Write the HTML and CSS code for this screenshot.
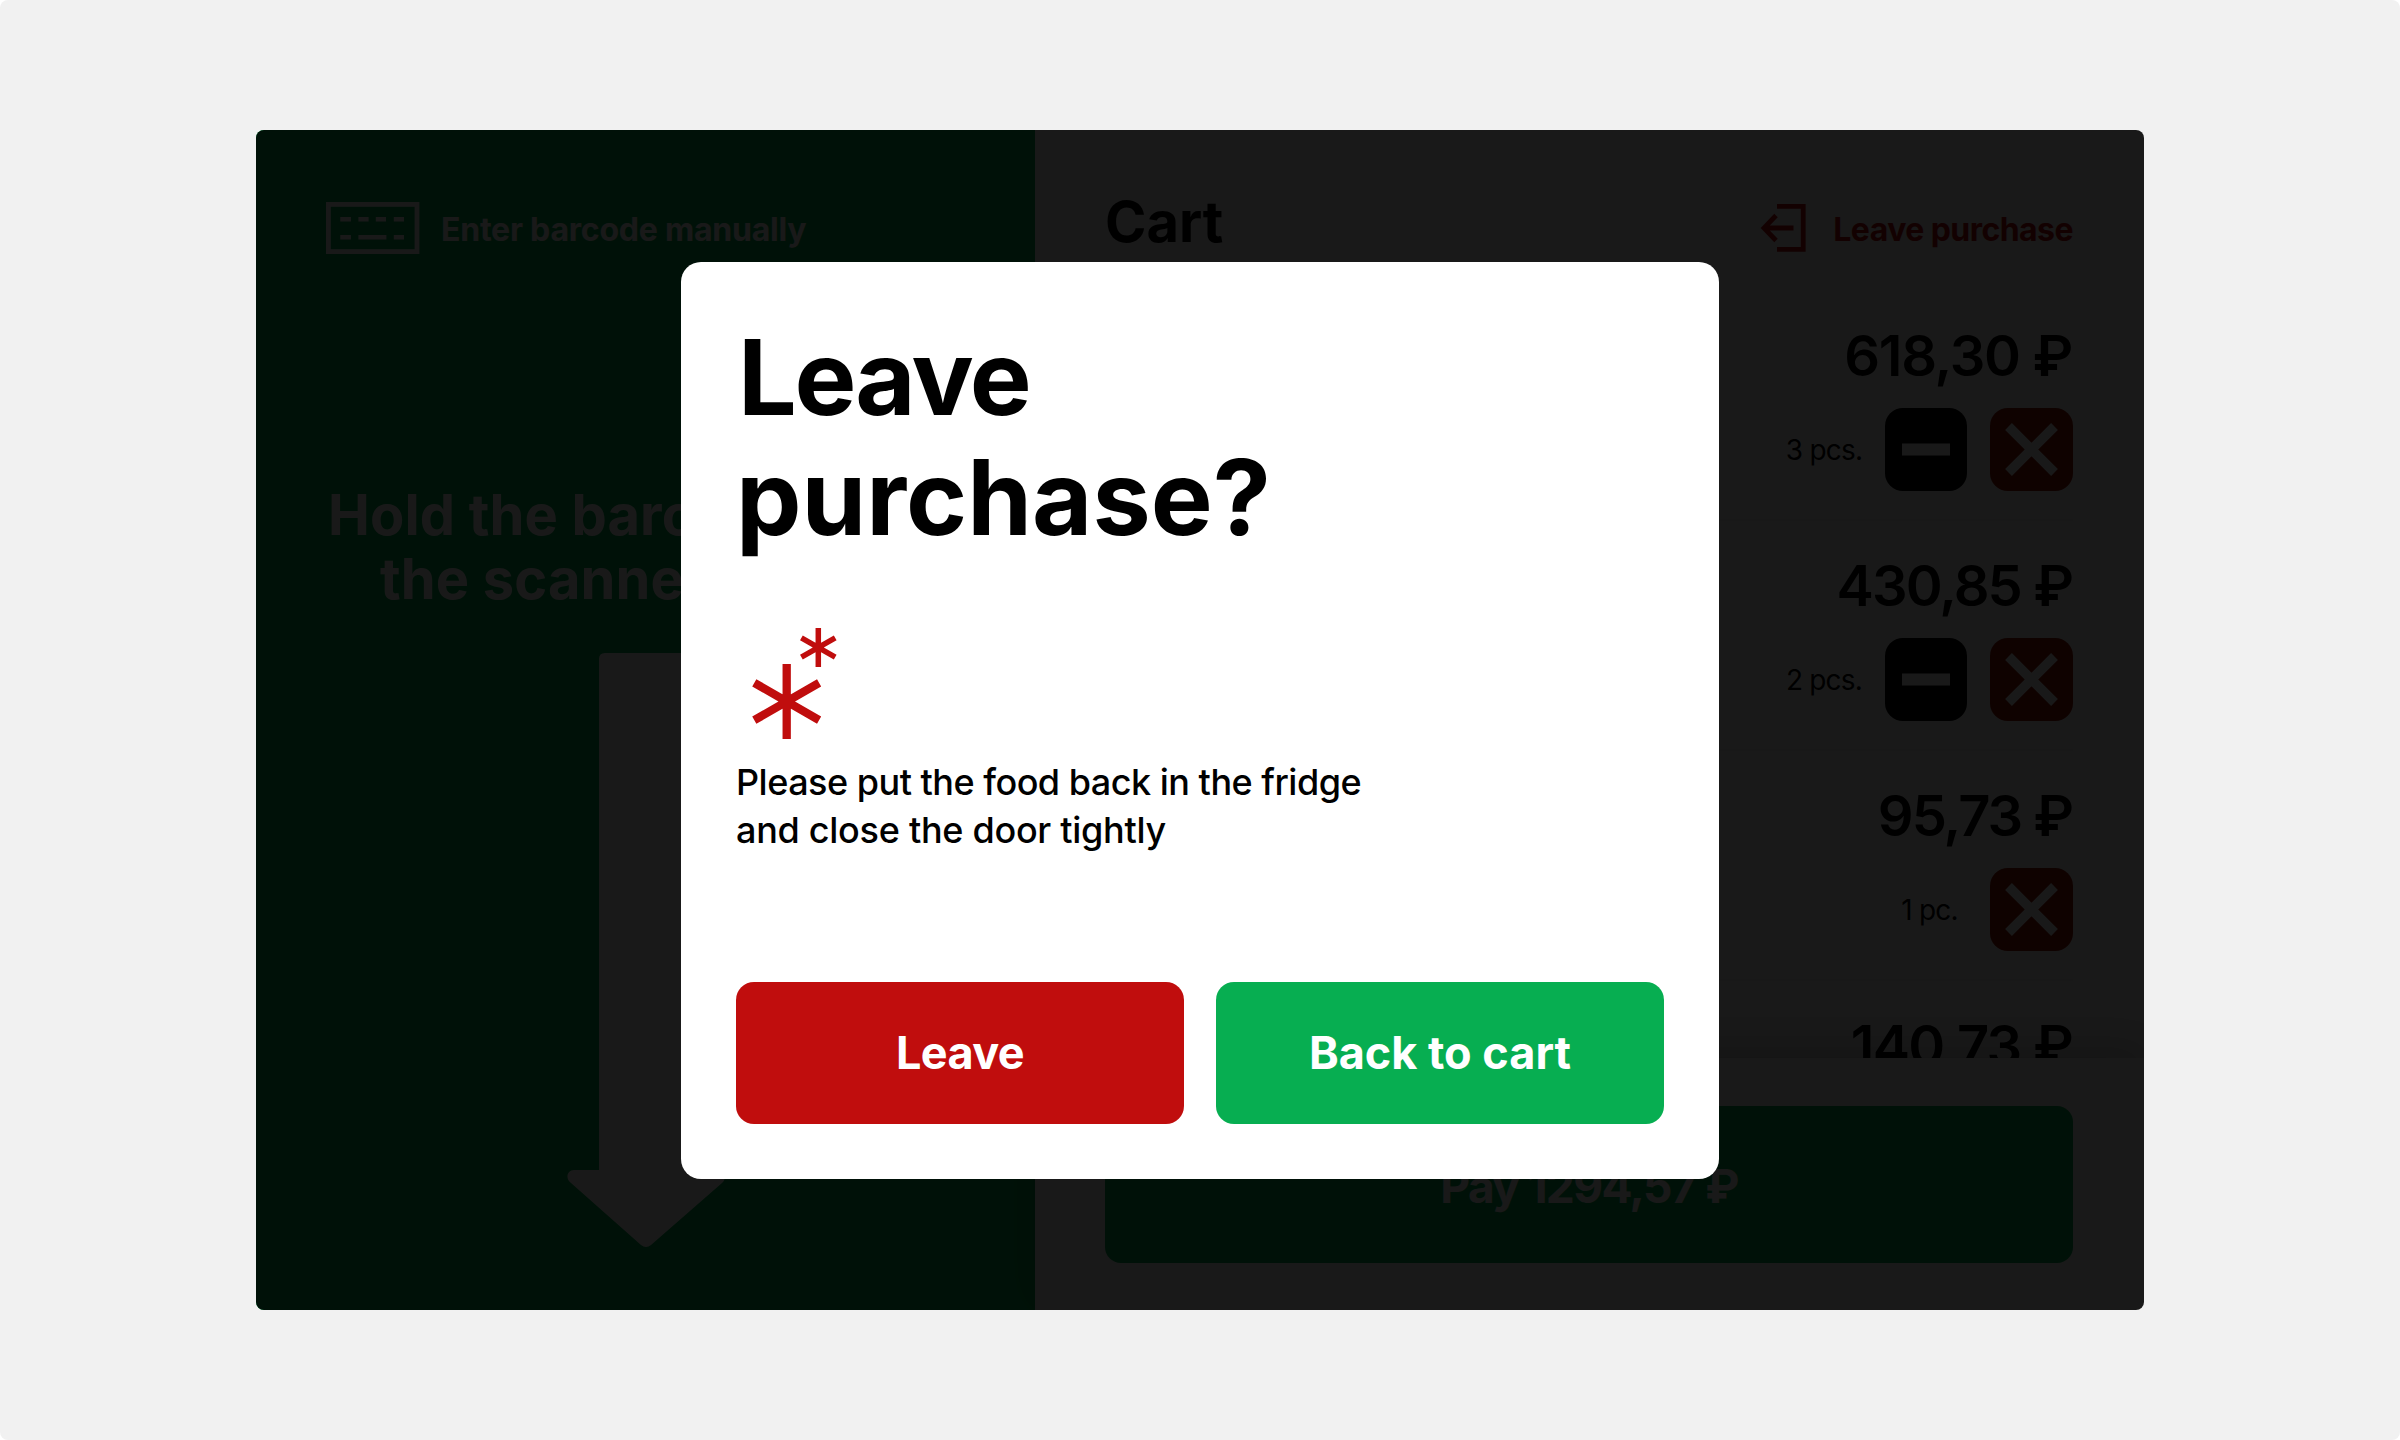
FILE: index.html
```html
<!DOCTYPE html>
<html lang="en">
<head>
  <meta charset="UTF-8">
  <title>Leave purchase</title>
  <link rel="stylesheet" href="styles.css">
</head>
<body>
<div class="screen">
  <div class="scan">
    <div class="manual">
      <svg width="94" height="52" viewBox="0 0 94 52">
        <rect x="2.4" y="2.4" width="88.6" height="47.2" fill="none" stroke="#fff" stroke-width="4.8"/>
        <path d="M14.3 17.3h10.6M32.4 17.3h10.2M49.8 17.3H60M67.8 17.3H78M14.3 35.2h10.6M32.4 35.2H60.4M67.8 35.2H78" stroke="#fff" stroke-width="4.6"/>
      </svg>
      <span class="manual-text">Enter barcode manually</span>
    </div>
    <div class="hint">
      <p>Hold the barcode up to</p>
      <p class="second">the scanner window</p>
    </div>
    <svg class="arrow" width="158" height="595" viewBox="0 0 158 595">
      <path d="M38 0H120Q126 0 126 6V517H151C158 517 160 526 155 530L84 592Q79 596 74 592L4 530C-2 526 0 517 7 517H32V6Q32 0 38 0Z" fill="#fff"/>
    </svg>
  </div>
  <div class="cart">
    <div class="head">
      <h2>Cart</h2>
      <div class="exit">
        <svg width="46" height="48" viewBox="0 0 46 48">
          <path d="M17 2.4H43.2V45.4H17M33.5 24H4M16 11.5L4 24L16 36.5" fill="none" stroke="#c00d0d" stroke-width="4.8"/>
        </svg>
        <span class="exit-text">Leave purchase</span>
      </div>
    </div>
    <div class="list">
      <div class="item">
        <div class="price p1">618,30 ₽</div>
        <div class="controls">
          <div class="count"><span>3 pcs.</span><i class="btn minus"><svg width="82" height="83"><path d="M17 41.5H65" stroke="#fff" stroke-width="12"/></svg></i></div>
          <i class="btn del"><svg width="83" height="83"><path d="M18.5 18.5L64.5 64.5M64.5 18.5L18.5 64.5" stroke="#fff" stroke-width="9.6"/></svg></i>
        </div>
      </div>
      <div class="item">
        <div class="price p2">430,85 ₽</div>
        <div class="controls">
          <div class="count"><span>2 pcs.</span><i class="btn minus"><svg width="82" height="83"><path d="M17 41.5H65" stroke="#fff" stroke-width="12"/></svg></i></div>
          <i class="btn del"><svg width="83" height="83"><path d="M18.5 18.5L64.5 64.5M64.5 18.5L18.5 64.5" stroke="#fff" stroke-width="9.6"/></svg></i>
        </div>
      </div>
      <div class="item">
        <div class="price p3">95,73 ₽</div>
        <div class="controls">
          <div class="count"><span>1 pc.</span><i class="btn del"><svg width="83" height="83"><path d="M18.5 18.5L64.5 64.5M64.5 18.5L18.5 64.5" stroke="#fff" stroke-width="9.6"/></svg></i></div>
        </div>
      </div>
      <div class="item">
        <div class="price p4">140,73 ₽</div>
      </div>
    </div>
    <div class="footer">
      <div class="pay">Pay 1294,57 ₽</div>
    </div>
  </div>
  <div class="overlay">
    <div class="modal">
      <h1><span class="t1">Leave</span><br>purchase?</h1>
      <svg class="frost" width="94" height="117" viewBox="0 0 94 117">
        <g fill="none" stroke="#c00d0d">
          <path stroke-width="8.3" d="M41.7 39V114M9.3 57.8L74.1 95.2M9.3 95.2L74.1 57.8"/>
          <path stroke-width="5.5" d="M73.3 3V42M56.4 12.8L90.2 32.2M56.4 32.2L90.2 12.8"/>
        </g>
      </svg>
      <p class="text"><span class="d1">Please put the food back in the fridge</span><br><span class="d2">and close the door tightly</span></p>
      <div class="buttons">
        <button class="leave">Leave</button>
        <button class="back">Back to cart</button>
      </div>
    </div>
  </div>
</div>
</body>
</html>
```
FILE: styles.css
```css
*{margin:0;padding:0;box-sizing:border-box;}
html{background:#fff;}
body{display:flex;justify-content:center;height:1440px;padding-top:130px;border-radius:8px;background:#f1f1f1;font-family:Inter,"Open Sans",sans-serif;color:#000;}
svg{display:block;flex:none;}
.screen{position:relative;width:1888px;height:1180px;display:flex;border-radius:8px;overflow:hidden;}

.scan{width:779px;background:#07ae51;color:#fff;padding:72px 0 0 70px;}
.manual{display:flex;align-items:center;gap:21px;height:52px;}
.manual-text,.exit-text{padding-top:4px;font-size:32px;line-height:40px;font-weight:700;white-space:nowrap;}
.manual-text{letter-spacing:-0.22px;}
.exit-text{letter-spacing:-0.55px;}
.hint{margin-top:229px;padding-left:2px;font-size:56px;line-height:64px;font-weight:700;letter-spacing:0.15px;white-space:nowrap;}
.hint .second{padding-left:52px;}
.arrow{margin:42px 0 0 241px;}

.cart{flex:1;display:flex;flex-direction:column;background:#f8f8f8;}
.head{display:flex;justify-content:space-between;height:161px;padding:59px 71px 0 70px;}
.head h2{padding-top:1px;font-size:56px;line-height:64px;font-weight:700;}
.exit{display:flex;align-items:center;gap:27px;height:78px;color:#c00d0d;}
.list{height:767px;overflow:hidden;padding:0 71px 0 70px;}
.item{height:230px;padding-top:33px;border-bottom:2px solid #eee;}
.price{padding-right:1px;font-size:56px;line-height:64px;font-weight:600;text-align:right;white-space:nowrap;}
.p1{letter-spacing:-1.3px;}
.p2{letter-spacing:-1.9px;}
.p3{letter-spacing:-2px;}
.p4{letter-spacing:-1.7px;}
.controls{display:flex;justify-content:flex-end;gap:23px;margin-top:20px;}
.count{display:flex;width:204px;border-radius:18px;background:#fff;font-size:28px;letter-spacing:-0.8px;}
.count span{flex:1;text-align:center;line-height:85px;height:83px;}
.btn{height:83px;border-radius:18px;overflow:hidden;}
.minus{background:#000;}
.del{background:#961400;}
.footer{position:relative;height:252px;padding:48px 71px 0 70px;background:#f8f8f8;box-shadow:0 -8px 36px rgba(0,0,0,0.2);}
.pay{height:157px;border-radius:16px;background:#07ae51;color:#fff;font-size:46px;font-weight:700;line-height:161px;letter-spacing:-1.6px;text-align:center;white-space:nowrap;}

.overlay{position:absolute;top:0;left:0;width:100%;height:100%;display:flex;align-items:center;justify-content:center;background:rgba(0,0,0,0.9);}
.modal{width:1038px;height:917px;padding:55px;border-radius:20px;background:#fff;display:flex;flex-direction:column;}
.modal h1{font-size:104px;line-height:120px;font-weight:700;white-space:nowrap;}
.t1{padding-left:2px;letter-spacing:-2.3px;}
.frost{margin:68px 0 0 9px;}
.text{margin-top:16px;font-size:36px;line-height:48px;font-weight:500;white-space:nowrap;}
.d1{letter-spacing:-0.5px;}
.d2{letter-spacing:-0.28px;}
.buttons{display:flex;gap:32px;margin-top:auto;}
.buttons button{flex:1;height:142px;border:0;border-radius:18px;color:#fff;font-family:inherit;font-size:45px;font-weight:700;}
.buttons .leave{background:#c00d0d;letter-spacing:-0.6px;}
.buttons .back{background:#07ae51;}
```
